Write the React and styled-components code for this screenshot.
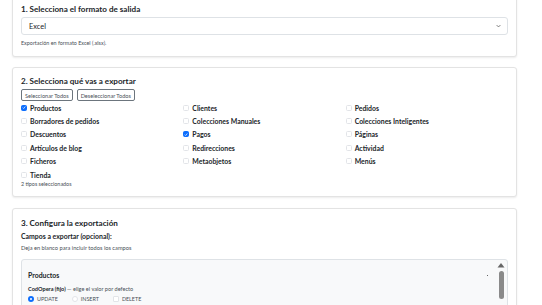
import React from "react";
import styled, { createGlobalStyle } from "styled-components";

const GlobalStyle = createGlobalStyle`
  html, body {
    margin: 0;
    padding: 0;
    background: #ffffff;
    font-family: Lato, "Open Sans", sans-serif;
    color: #212529;
    overflow: hidden;
  }
`;

const TYPES = [
  { name: "Productos", checked: true },
  { name: "Clientes" },
  { name: "Pedidos" },
  { name: "Borradores de pedidos" },
  { name: "Colecciones Manuales" },
  { name: "Colecciones Inteligentes" },
  { name: "Descuentos" },
  { name: "Pagos", checked: true },
  { name: "Páginas" },
  { name: "Artículos de blog" },
  { name: "Redirecciones" },
  { name: "Actividad" },
  { name: "Ficheros" },
  { name: "Metaobjetos" },
  { name: "Menús" },
  { name: "Tienda" },
];

const App = () => {
  return (
    <>
      <GlobalStyle />
      <Page>
        {/* 1. formato */}
        <Card $top={-5}>
          <Title>1. Selecciona el formato de salida</Title>
          <Select>
            <span>Excel</span>
            <Chevron viewBox="0 0 8 6">
              <path d="M1 1.5 L4 4.5 L7 1.5" fill="none" stroke="#555" strokeWidth="1.2" />
            </Chevron>
          </Select>
          <Hint $mt={4}>Exportación en formato Excel (.xlsx).</Hint>
        </Card>

        {/* 2. tipos */}
        <Card>
          <Title>2. Selecciona qué vas a exportar</Title>
          <ButtonRow>
            <OutlineButton>Seleccionar Todos</OutlineButton>
            <OutlineButton>Deseleccionar Todos</OutlineButton>
          </ButtonRow>
          <TypeGrid>
            {TYPES.map((t) => (
              <TypeItem key={t.name}>
                <Check $checked={t.checked}>
                  {t.checked && (
                    <svg viewBox="0 0 8 8" width="5" height="5">
                      <path d="M1.5 4.2 L3.3 6 L6.6 2" fill="none" stroke="#fff" strokeWidth="1.4" />
                    </svg>
                  )}
                </Check>
                {t.name}
              </TypeItem>
            ))}
          </TypeGrid>
          <Hint $lh={6}>2 tipos seleccionados</Hint>
        </Card>

        {/* 3. configuración */}
        <Card $mt={1}>
          <Title $mt={1}>3. Configura la exportación</Title>
          <FieldLabel>Campos a exportar (opcional):</FieldLabel>
          <Hint $mt={3} $size={5.7}>Deja en blanco para incluir todos los campos</Hint>
          <FieldBox>
            <FieldHeader>
              <span>Productos</span>
              <Dot />
            </FieldHeader>
            <FixedLine>
              <b>CodOpera (fijo)</b> — elige el valor por defecto
            </FixedLine>
            <RadioRow>
              <RadioOption>
                <Radio $on />
                UPDATE
              </RadioOption>
              <RadioOption>
                <Radio />
                INSERT
              </RadioOption>
              <RadioOption>
                <SquareBox />
                DELETE
              </RadioOption>
            </RadioRow>
            <ScrollBar>
              <svg viewBox="0 0 8 6" width="8" height="6">
                <polygon points="0.5,5.5 4,1 7.5,5.5" fill="#666" />
              </svg>
              <Thumb />
            </ScrollBar>
          </FieldBox>
        </Card>
      </Page>
    </>
  );
};

const Page = styled.div`
  display: flex;
  flex-direction: column;
  gap: 10px;
  padding: 0 25px 0 12px;
  height: 305px;
`;

const Card = styled.section`
  margin-top: ${(p) => (p.$top ? `${p.$top}px` : p.$mt ? `${p.$mt}px` : "0")};
  border: 1px solid #e3e3e3;
  border-radius: 3px;
  box-shadow: 0 1px 2px rgba(0, 0, 0, 0.08);
  padding: 7px 8px 9px 8px;
  background: #fff;
  flex-shrink: 0;
`;

const Title = styled.h5`
  margin: ${(p) => p.$mt ?? 0}px 0 2px;
  font-size: 8.1px;
  line-height: 12px;
  font-weight: 700;
  color: #212529;
`;

const Select = styled.div`
  display: flex;
  align-items: center;
  justify-content: space-between;
  height: 18px;
  box-sizing: border-box;
  padding: 0 6px 0 7px;
  border: 1px solid #dee2e6;
  border-radius: 3px;
  font-size: 7.4px;
  color: #212529;
`;

const Chevron = styled.svg`
  width: 5px;
  height: 4px;
`;

const Hint = styled.div`
  margin-top: ${(p) => p.$mt ?? 0}px;
  font-size: ${(p) => p.$size ?? 5.4}px;
  line-height: ${(p) => p.$lh ?? 8}px;
  color: #495057;
`;

const ButtonRow = styled.div`
  display: flex;
  gap: 4px;
`;

const OutlineButton = styled.button`
  height: 12px;
  padding: 0 3px;
  border: 1px solid #6c757d;
  border-radius: 2px;
  background: #fff;
  font-family: inherit;
  font-size: 5.6px;
  color: #495057;
`;

const TypeGrid = styled.div`
  display: grid;
  grid-template-columns: repeat(3, 1fr);
`;

const TypeItem = styled.label`
  display: flex;
  align-items: center;
  gap: 3px;
  height: 13.4px;
  font-size: 6.9px;
  font-weight: 700;
  color: #212529;
`;

const Check = styled.span`
  display: inline-flex;
  align-items: center;
  justify-content: center;
  width: 6px;
  height: 6px;
  box-sizing: border-box;
  border-radius: 1.5px;
  border: 1px solid ${(p) => (p.$checked ? "#0d6efd" : "#e2e4e8")};
  background: ${(p) => (p.$checked ? "#0d6efd" : "#fff")};
`;

const FieldLabel = styled.div`
  margin-top: 1px;
  font-size: 6.9px;
  font-weight: 700;
  line-height: 10px;
  color: #212529;
`;

const FieldBox = styled.div`
  position: relative;
  margin-top: 7px;
  height: 80px;
  box-sizing: border-box;
  padding: 10px 14px 0 6px;
  border: 1px solid #dee2e6;
  border-radius: 3px;
  background: #f8f9fa;
  overflow: hidden;
`;

const ScrollBar = styled.div`
  position: absolute;
  top: 2px;
  right: 2px;
  bottom: 0;
  width: 8px;
  display: flex;
  flex-direction: column;
  align-items: center;
  gap: 3px;
`;

const Thumb = styled.div`
  width: 5px;
  height: 28px;
  border-radius: 3px;
  background: #8a8a8a;
`;

const FieldHeader = styled.div`
  display: flex;
  align-items: center;
  justify-content: space-between;
  font-size: 6.9px;
  font-weight: 700;
  line-height: 10px;
  padding-right: 5px;
`;

const Dot = styled.span`
  width: 1px;
  height: 1px;
  background: #666;
`;

const FixedLine = styled.div`
  margin-top: 3.5px;
  font-size: 5.6px;
  line-height: 9px;
  color: #495057;
  b {
    font-weight: 700;
    color: #212529;
  }
`;

const RadioRow = styled.div`
  display: flex;
  gap: 14px;
  margin-top: 2.5px;
`;

const RadioOption = styled.label`
  display: flex;
  align-items: center;
  gap: 3px;
  height: 8px;
  font-size: 5.4px;
  color: #495057;
`;

const Radio = styled.span`
  width: 6px;
  height: 6px;
  box-sizing: border-box;
  border-radius: 50%;
  border: ${(p) => (p.$on ? "2px solid #0d6efd" : "1px solid #e2e4e8")};
  background: #fff;
`;

const SquareBox = styled.span`
  width: 6px;
  height: 6px;
  box-sizing: border-box;
  border-radius: 1px;
  border: 1px solid #e2e4e8;
  background: #fff;
`;

export default App;
